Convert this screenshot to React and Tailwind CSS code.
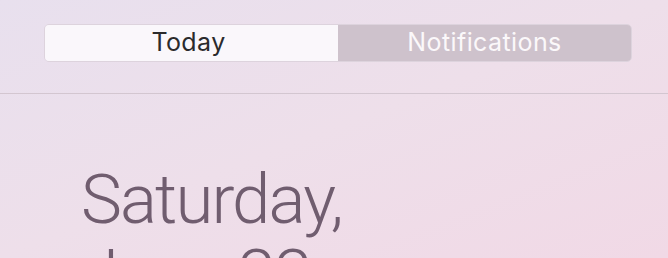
import React from 'react'

const App = () => {
  return (
    <div className="w-[668px] h-[258px] overflow-hidden bg-gradient-to-br from-[#e8e0ee] via-[#eedfea] to-[#f1d9e6] font-['Roboto',sans-serif]">
      <div className="pt-6 px-11">
        <div className="flex h-[38px] w-[588px] rounded-[5px] overflow-hidden border border-[#ddd3dd] font-['Inter',sans-serif] text-[25px] tracking-[0.4px]">
          <div className="w-1/2 flex items-center justify-center pr-[6px] bg-[#faf7fb] text-[#2b2a2c]">
            Today
          </div>
          <div className="w-1/2 flex items-center justify-center bg-[#cec2cc] text-[#fbf8fa]">
            Notifications
          </div>
        </div>
      </div>
      <div className="mt-[31px] h-px bg-[#d3c6d0]" />
      <div className="pl-[81px] pt-[68px] text-[69px] leading-[75px] font-light text-[#705d6f] tracking-[-1.9px]">
        <div>Saturday,</div>
        <div>June 22</div>
      </div>
    </div>
  )
}

export default App
